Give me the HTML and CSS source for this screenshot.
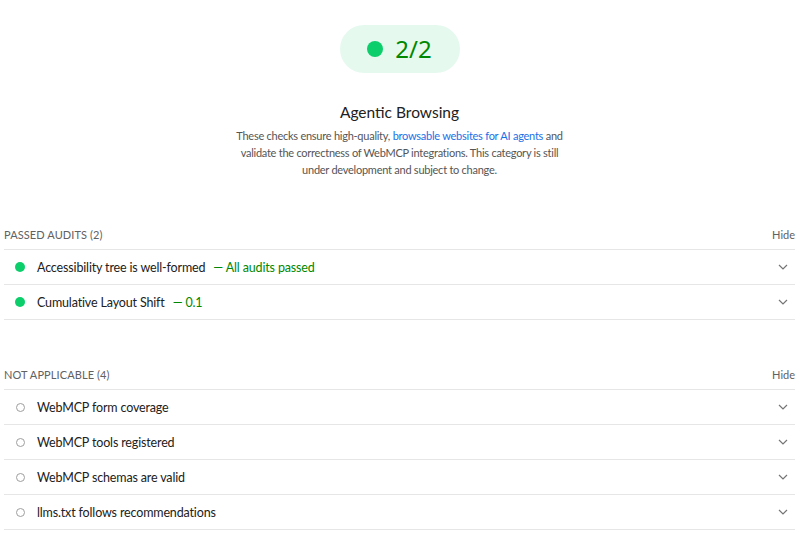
FILE: index.html
```html
<!DOCTYPE html>
<html lang="en">
<head>
    <meta charset="UTF-8">
    <meta name="viewport" content="width=device-width, initial-scale=1.0">
    <title>Agentic Browsing</title>
    <link rel="stylesheet" href="styles.css">
</head>
<body>
    <div class="category-header">
        <div class="gauge">
            <span class="gauge-dot"></span>
            <span class="gauge-score">2/2</span>
        </div>
        <h2 class="category-title">Agentic Browsing</h2>
        <p class="category-desc">These checks ensure high-quality, <a href="#">browsable websites for AI agents</a> and validate the correctness of WebMCP integrations. This category is still under development and subject to change.</p>
    </div>

    <div class="audit-group">
        <div class="group-header">
            <span class="group-title">Passed audits (2)</span>
            <span class="group-toggle">Hide</span>
        </div>
        <div class="audit">
            <span class="icon pass"></span>
            <span class="audit-title">Accessibility tree is well-formed</span>
            <span class="audit-value">— All audits passed</span>
            <span class="chevron"><svg width="10" height="6" viewBox="0 0 10 6"><path d="M1 1l4 4 4-4" fill="none" stroke="#757575" stroke-width="1.2"/></svg></span>
        </div>
        <div class="audit">
            <span class="icon pass"></span>
            <span class="audit-title">Cumulative Layout Shift</span>
            <span class="audit-value">— 0.1</span>
            <span class="chevron"><svg width="10" height="6" viewBox="0 0 10 6"><path d="M1 1l4 4 4-4" fill="none" stroke="#757575" stroke-width="1.2"/></svg></span>
        </div>
    </div>

    <div class="audit-group">
        <div class="group-header">
            <span class="group-title">Not applicable (4)</span>
            <span class="group-toggle">Hide</span>
        </div>
        <div class="audit">
            <span class="icon na"></span>
            <span class="audit-title">WebMCP form coverage</span>
            <span class="chevron"><svg width="10" height="6" viewBox="0 0 10 6"><path d="M1 1l4 4 4-4" fill="none" stroke="#757575" stroke-width="1.2"/></svg></span>
        </div>
        <div class="audit">
            <span class="icon na"></span>
            <span class="audit-title">WebMCP tools registered</span>
            <span class="chevron"><svg width="10" height="6" viewBox="0 0 10 6"><path d="M1 1l4 4 4-4" fill="none" stroke="#757575" stroke-width="1.2"/></svg></span>
        </div>
        <div class="audit">
            <span class="icon na"></span>
            <span class="audit-title">WebMCP schemas are valid</span>
            <span class="chevron"><svg width="10" height="6" viewBox="0 0 10 6"><path d="M1 1l4 4 4-4" fill="none" stroke="#757575" stroke-width="1.2"/></svg></span>
        </div>
        <div class="audit">
            <span class="icon na"></span>
            <span class="audit-title">llms.txt follows recommendations</span>
            <span class="chevron"><svg width="10" height="6" viewBox="0 0 10 6"><path d="M1 1l4 4 4-4" fill="none" stroke="#757575" stroke-width="1.2"/></svg></span>
        </div>
    </div>
</body>
</html>
```

FILE: styles.css
```css
body { margin: 0; padding: 0 5px 0 4px; font-family: Lato, "Noto Sans", sans-serif; color: #212121; background: #fff; }

.category-header { display: flex; flex-direction: column; align-items: center; text-align: center; }
.gauge { margin-top: 25px; width: 120px; height: 48px; border-radius: 24px; background: #e6f9ef; display: flex; align-items: center; justify-content: center; gap: 12px; }
.gauge-dot { width: 16px; height: 16px; border-radius: 50%; background: #0cce6b; }
.gauge-score { font-family: "Noto Sans", sans-serif; font-size: 24px; color: #008800; line-height: 1; }
.category-title { margin: 29px 0 0; font-size: 15.5px; font-weight: normal; line-height: 20px; }
.category-desc { margin: 5px 0 0; max-width: 340px; font-size: 11px; letter-spacing: -0.25px; line-height: 17px; color: #555; }
.category-desc a { color: #1a6fe8; text-decoration: none; }

.audit-group { margin-top: 41px; }
.audit-group + .audit-group { margin-top: 39px; }
.group-header { height: 30px; display: flex; align-items: center; justify-content: space-between; border-bottom: 1px solid #e6e6e6; font-size: 11px; color: #616161; }
.group-title { text-transform: uppercase; letter-spacing: 0.1px; }
.audit { height: 34px; display: flex; align-items: center; border-bottom: 1px solid #e6e6e6; font-size: 12.5px; letter-spacing: -0.15px; }
.icon { width: 10px; height: 10px; border-radius: 50%; margin: 0 12px 0 11px; box-sizing: border-box; }
.icon.pass { background: #0cce6b; }
.icon.na { width: 9px; height: 9px; border: 1.5px solid #9e9e9e; margin: 0 12px 0 12px; }
.audit-value { margin-left: 8px; color: #008800; }
.chevron { margin-left: auto; margin-right: 7px; display: flex; }
```
